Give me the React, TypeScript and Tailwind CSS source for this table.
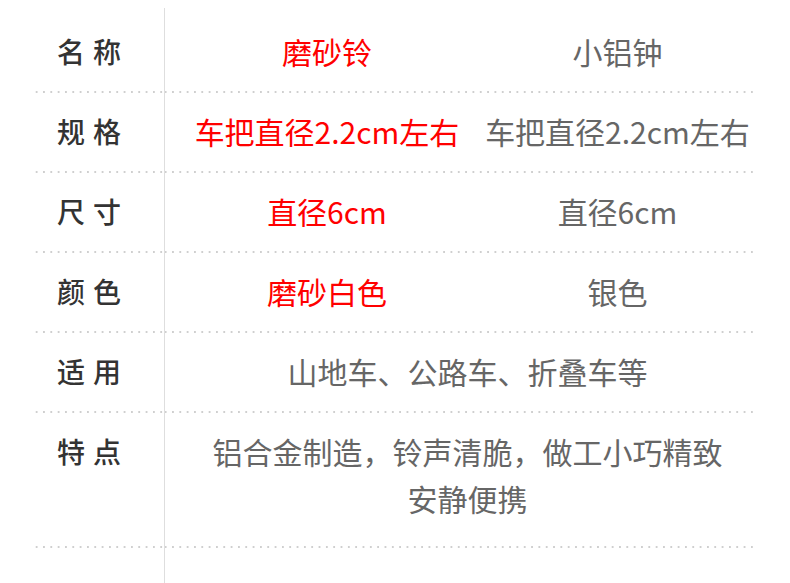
const dots =
  "bg-[linear-gradient(to_right,#cfcfcf_2px,transparent_2px)] bg-[length:7.33px_2px] bg-repeat-x bg-bottom";

type Row = {
  label: string;
  left?: string;
  right?: string;
  full?: React.ReactNode;
};

const rows: Row[] = [
  { label: "名称", left: "磨砂铃", right: "小铝钟" },
  { label: "规格", left: "车把直径2.2cm左右", right: "车把直径2.2cm左右" },
  { label: "尺寸", left: "直径6cm", right: "直径6cm" },
  { label: "颜色", left: "磨砂白色", right: "银色" },
  { label: "适用", full: "山地车、公路车、折叠车等" },
];

const SpecRow = ({ row, first }: { row: Row; first?: boolean }) => {
  const h = first ? "h-[85px] pt-[1px]" : "h-[80px] pb-[4px]";
  return (
    <>
      <div className={`${dots} ${h} flex items-center pl-[25px]`}>
        <span className="text-[28px] leading-[47px] font-medium tracking-[8px] text-[#333]">
          {row.label}
        </span>
      </div>
      <div className={`${dots} ${h} border-l border-[#dedede] pl-[12px] flex items-center`}>
        {row.full ? (
          <div className="w-full text-center text-[30px] leading-[47px] text-[#666]">{row.full}</div>
        ) : (
          <div className="w-full grid grid-cols-[300px_1fr] text-[30px] leading-[47px]">
            <span className="text-center text-[#ff0000]">{row.left}</span>
            <span className="text-center text-[#666]">{row.right}</span>
          </div>
        )}
      </div>
    </>
  );
};

export default function App() {
  return (
    <div
      className="w-[790px] h-[583px] bg-white overflow-hidden pt-[8px]"
      style={{ fontFamily: '"Noto Sans CJK SC", "Noto Sans", sans-serif' }}
    >
      <div className="ml-[32px] w-[726px] grid grid-cols-[132px_1fr]">
        {rows.map((r, i) => (
          <SpecRow key={r.label} row={r} first={i === 0} />
        ))}

        {/* 特点 */}
        <div className={`${dots} h-[135px] pt-[15px] pl-[25px]`}>
          <span className="text-[28px] leading-[47px] font-medium tracking-[8px] text-[#333]">特点</span>
        </div>
        <div className={`${dots} h-[135px] pt-[15px] border-l border-[#dedede] pl-[12px]`}>
          <p className="text-center text-[30px] leading-[47px] text-[#666]">
            铝合金制造，铃声清脆，做工小巧精致
            <br />
            安静便携
          </p>
        </div>

        <div className="h-[40px]" />
        <div className="h-[40px] border-l border-[#dedede]" />
      </div>
    </div>
  );
}
